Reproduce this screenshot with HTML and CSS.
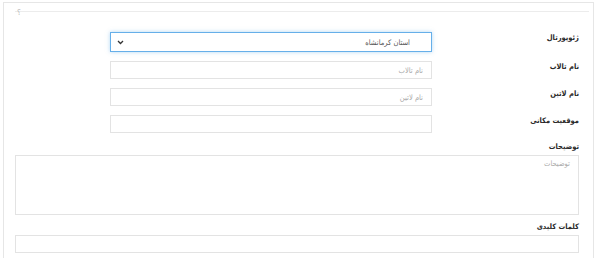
FILE: index.html
```html
<!DOCTYPE html>
<html lang="fa" dir="rtl">
<head>
<meta charset="utf-8">
<link rel="stylesheet" href="styles.css">
</head>
<body>
<div class="panel">
  <div class="legend"><span class="qmark">؟</span></div>
  <div class="row row-first">
    <label class="lbl">ژئوپورتال</label>
    <div class="select">
      <span class="sel-text">استان کرمانشاه</span>
      <svg class="chev" width="7" height="5" viewBox="0 0 7 5"><path d="M1 1 L3.5 3.5 L6 1" fill="none" stroke="#333" stroke-width="1.3"/></svg>
    </div>
  </div>
  <div class="row">
    <label class="lbl">نام تالاب</label>
    <div class="input"><span class="ph">نام تالاب</span></div>
  </div>
  <div class="row">
    <label class="lbl">نام لاتین</label>
    <div class="input"><span class="ph">نام لاتین</span></div>
  </div>
  <div class="row">
    <label class="lbl">موقعیت مکانی</label>
    <div class="input"></div>
  </div>
  <div class="block">
    <label class="lbl-full">توضیحات</label>
    <div class="textarea"><span class="ph">توضیحات</span></div>
  </div>
  <div class="block block-kw">
    <label class="lbl-full">کلمات کلیدی</label>
    <div class="input-full"></div>
  </div>
</div>
</body>
</html>
```
FILE: styles.css
```css
html, body {
  margin: 0;
  padding: 0;
  background: #fff;
}
body {
  font-family: "DejaVu Sans Condensed", "DejaVu Sans", sans-serif;
  font-size: 7.5px;
  color: #333;
  padding: 2px 7px 0 3px;
}
.panel {
  border: 1px solid #e6e6e6;
  border-bottom: none;
  height: 260px;
  padding: 0 14px 0 11px;
  box-sizing: border-box;
}
.legend {
  height: 8px;
  border-bottom: 1px solid #ececec;
  margin: 0 -10px 0 0;
  display: flex;
  justify-content: flex-end;
}
.qmark {
  color: #bbb;
  font-size: 8px;
  line-height: 8px;
  margin-top: 6px;
  margin-left: 2px;
}
.row {
  display: flex;
  align-items: flex-start;
  margin-top: 9px;
}
.row-first {
  margin-top: 20px;
  margin-bottom: 1px;
}
.lbl, .lbl-full {
  font-weight: bold;
  color: #2a2a2a;
  font-size: 7.5px;
  line-height: 10px;
}
.lbl {
  width: 147px;
  flex: none;
  padding-top: 1px;
}
.select {
  width: 322px;
  height: 20px;
  box-sizing: border-box;
  border: 1px solid #66afe9;
  box-shadow: 0 0 4px rgba(102, 175, 233, 0.5);
  display: flex;
  align-items: center;
  justify-content: space-between;
  padding: 0 21px 0 6px;
}
.sel-text {
  color: #555;
}
.chev {
  display: block;
}
.input {
  width: 322px;
  height: 18px;
  box-sizing: border-box;
  border: 1px solid #e3e3e3;
  display: flex;
  align-items: center;
  padding: 0 8px;
}
.ph {
  color: #aaa;
}
.block {
  margin-top: 9px;
  display: flex;
  flex-direction: column;
}
.block-kw {
  margin-top: 7px;
}
.lbl-full {
  margin-bottom: 3px;
}
.textarea {
  height: 60px;
  box-sizing: border-box;
  border: 1px solid #e3e3e3;
  padding: 3px 8px;
}
.input-full {
  height: 18px;
  box-sizing: border-box;
  border: 1px solid #e3e3e3;
}
```
